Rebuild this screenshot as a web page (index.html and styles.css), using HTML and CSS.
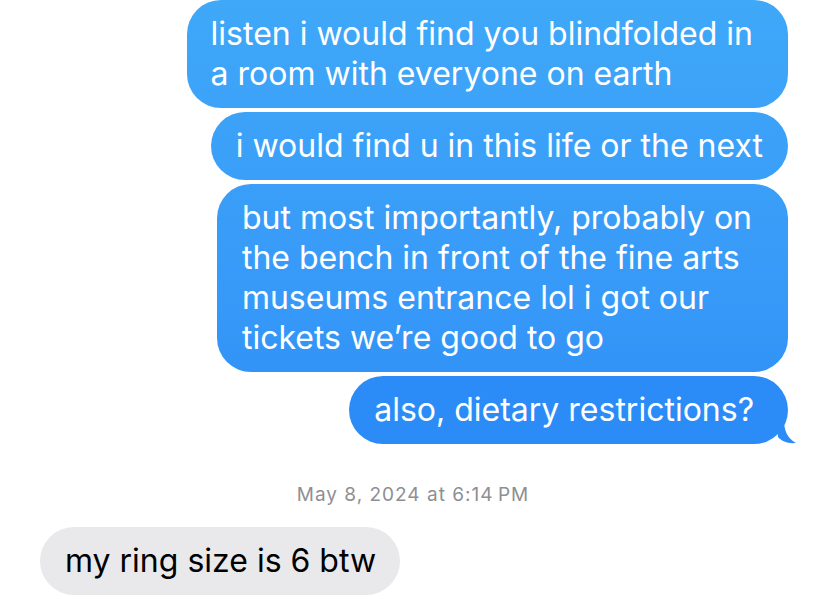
FILE: index.html
```html
<!DOCTYPE html>
<html>
<head>
<meta charset="utf-8">
<link rel="stylesheet" href="styles.css">
</head>
<body>
<div class="thread">
  <div class="sent">
    <div class="bubble blue wide1">listen i would find you blindfolded in<br>a room with everyone on earth</div>
    <div class="bubble blue">i would find u in this life or the next</div>
    <div class="bubble blue wide3">but most importantly, probably on<br>the bench in front of the fine arts<br>museums entrance lol i got our<br>tickets we’re good to go</div>
    <div class="bubble blue last">also, dietary restrictions?<svg class="tail" width="22" height="24" viewBox="0 0 22 24"><path d="M0 0 L6 0 C6 10 9 18 18 23 C10 23.8 4 21.5 0 17 Z" /></svg></div>
  </div>
  <div class="stamp">May 8, 2024 <span class="at">at</span> 6:14&#8239;PM</div>
  <div class="received">
    <div class="bubble gray">my ring size is 6 btw</div>
  </div>
</div>
</body>
</html>
```
FILE: styles.css
```css
html, body {
  margin: 0;
  padding: 0;
  background: #ffffff;
}
body {
  width: 828px;
  height: 599px;
  overflow: hidden;
  font-family: "Inter", "Liberation Sans", sans-serif;
}
.thread {
  display: flex;
  flex-direction: column;
}
.sent {
  display: flex;
  flex-direction: column;
  align-items: flex-end;
  gap: 4px;
  padding-right: 40px;
}
.bubble {
  position: relative;
  font-size: 32px;
  line-height: 40px;
  padding: 14px 25px;
  border-radius: 34px;
  white-space: nowrap;
}
.wide1 {
  padding-left: 24px;
  padding-right: 35px;
}
.wide3 {
  padding-left: 25px;
  padding-right: 36px;
}
.blue {
  color: #ffffff;
  background: linear-gradient(180deg, #3fa8f8 0px, #3799f8 300px, #2c8df7 450px) fixed;
}
.last {
  background: #2c8cf7;
  padding-right: 34px;
}
.tail {
  position: absolute;
  right: -12px;
  bottom: 0;
  fill: #2c8cf7;
}
.stamp {
  margin-top: 39px;
  text-align: center;
  font-size: 19px;
  letter-spacing: 1px;
  color: #8e8e93;
  padding-right: 2px;
}
.received {
  display: flex;
  padding-left: 40px;
  margin-top: 21px;
}
.gray {
  background: #e9e9eb;
  color: #000000;
  padding-right: 24px;
}
```
